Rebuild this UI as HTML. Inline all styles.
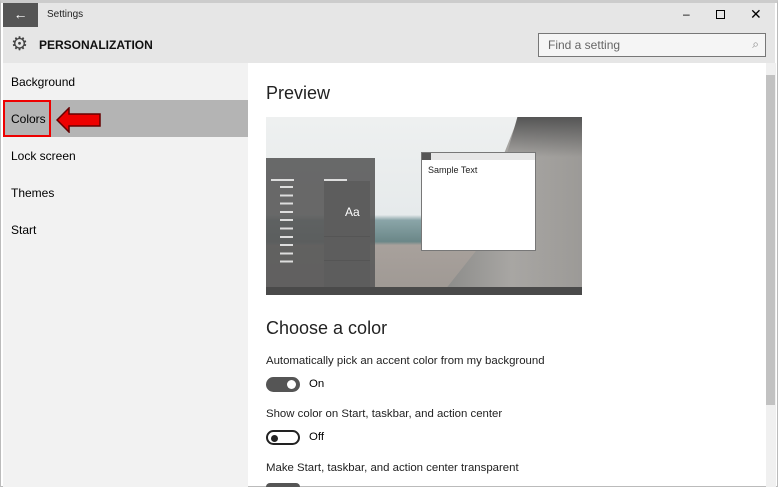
<!DOCTYPE html>
<html style="width:778px;height:487px;overflow:hidden"><head><style>
*{margin:0;padding:0;box-sizing:border-box}
body{width:778px;height:487px;background:#fff;font-family:"Liberation Sans",sans-serif;position:relative;overflow:hidden;color:#000}
.a{position:absolute}
</style></head><body>
<div class="a" style="left:0;top:0;width:778px;height:487px;border:1px solid #bbb;border-top:3px solid #ccc"></div>
<div class="a" style="left:3px;top:3px;width:772px;height:60px;background:#e6e6e6"></div>
<div class="a" style="left:3px;top:3px;width:35px;height:24px;background:#555;color:#fff;font-size:14px;text-align:center;line-height:22px">←</div>
<div class="a" style="left:47px;top:9px;font-size:10px;color:#222">Settings</div>
<div class="a" style="left:683px;top:7px;font-size:12px">–</div>
<div class="a" style="left:716px;top:10px;width:9px;height:9px;border:1px solid #000"></div>
<div class="a" style="left:750px;top:6px;font-size:14px">✕</div>
<div class="a" style="left:11px;top:35px;font-size:19px;color:#444;line-height:19px">⚙</div>
<div class="a" style="left:39px;top:38px;font-size:12px;font-weight:bold;color:#111">PERSONALIZATION</div>
<div class="a" style="left:538px;top:33px;width:228px;height:24px;border:1px solid #777;background:#f5f5f5;font-size:12px;color:#666;padding:4px 9px">Find a setting<span style="position:absolute;right:6px;top:3px;color:#888">⌕</span></div>
<div class="a" style="left:3px;top:63px;width:245px;height:424px;background:#f2f2f2"></div>
<div class="a" style="left:3px;top:100px;width:245px;height:37px;background:#b4b4b4"></div>
<div class="a" style="left:3px;top:100px;width:48px;height:37px;border:2px solid #e00"></div>
<svg class="a" style="left:56px;top:107px" width="46" height="26"><polygon points="1,13 13,1 13,7 44,7 44,19 13,19 13,25" fill="#e00" stroke="#600" stroke-width="1.5"/></svg>
<div class="a" style="left:11px;top:75px;font-size:12px">Background</div>
<div class="a" style="left:11px;top:112px;font-size:12px">Colors</div>
<div class="a" style="left:11px;top:149px;font-size:12px">Lock screen</div>
<div class="a" style="left:11px;top:186px;font-size:12px">Themes</div>
<div class="a" style="left:11px;top:223px;font-size:12px">Start</div>
<div class="a" style="left:766px;top:63px;width:10px;height:424px;background:#f0f0f0"></div>
<div class="a" style="left:766px;top:75px;width:9px;height:330px;background:#c2c2c2"></div>
<div class="a" style="left:266px;top:83px;font-size:18px;color:#222;font-weight:normal">Preview</div>
<div class="a" style="left:266px;top:117px;width:316px;height:178px;overflow:hidden;background:linear-gradient(180deg,#eef0f0 0%,#e6eaeb 55%,#8aa5a8 58%,#6b8788 70%,#a8a19c 72%,#9e9893 100%)">
 <div class="a" style="left:175px;top:0;width:141px;height:178px;background:linear-gradient(90deg,#8a8a88 0%,#a8a6a3 50%,#9c9a97 100%);clip-path:polygon(55% 0,100% 0,100% 100%,0 100%,35% 65%,45% 20%)"></div>
 <div class="a" style="left:240px;top:0;width:76px;height:40px;background:linear-gradient(180deg,#555,transparent);clip-path:polygon(15% 0,100% 0,100% 100%,0 100%)"></div>
 <div class="a" style="left:0;top:41px;width:109px;height:137px;background:rgba(90,90,90,.9)"></div>
 <div class="a" style="left:58px;top:64px;width:46px;height:114px;background:#5d5d5d"></div>
 <div class="a" style="left:58px;top:119px;width:46px;height:1px;background:#555"></div>
 <div class="a" style="left:58px;top:143px;width:46px;height:1px;background:#555"></div>
 <div class="a" style="left:79px;top:88px;color:#fff;font-size:12px">Aa</div>
 <div class="a" style="left:5px;top:62px;width:23px;height:2px;background:#ddd"></div>
 <div class="a" style="left:58px;top:62px;width:23px;height:2px;background:#ddd"></div>
 <div class="a" style="left:14px;top:69px;width:13px;height:80px;background:repeating-linear-gradient(#ddd 0 2px,transparent 2px 8.3px)"></div>
 <div class="a" style="left:0;top:170px;width:316px;height:8px;background:#4a4a4a"></div>
 <div class="a" style="left:155px;top:35px;width:115px;height:99px;background:#fff;border:1px solid #777"></div>
 <div class="a" style="left:156px;top:36px;width:113px;height:7px;background:#e6e6e6"></div>
 <div class="a" style="left:156px;top:36px;width:9px;height:7px;background:#555"></div>
 <div class="a" style="left:162px;top:48px;font-size:9px;color:#222">Sample Text</div>
</div>
<div class="a" style="left:266px;top:318px;font-size:18px;color:#222">Choose a color</div>
<div class="a" style="left:266px;top:355px;font-size:11.4px;color:#222">Automatically pick an accent color from my background</div>
<div class="a" style="left:266px;top:377px;width:34px;height:15px;border-radius:8px;background:#555"><div class="a" style="right:4px;top:3px;width:9px;height:9px;border-radius:50%;background:#fff"></div></div>
<div class="a" style="left:309px;top:378px;font-size:11.4px">On</div>
<div class="a" style="left:266px;top:408px;font-size:11.4px;color:#222">Show color on Start, taskbar, and action center</div>
<div class="a" style="left:266px;top:430px;width:34px;height:15px;border-radius:8px;border:2px solid #222"><div class="a" style="left:3px;top:2.5px;width:7px;height:7px;border-radius:50%;background:#222"></div></div>
<div class="a" style="left:309px;top:431px;font-size:11.4px">Off</div>
<div class="a" style="left:266px;top:462px;font-size:11.4px;color:#222">Make Start, taskbar, and action center transparent</div>
<div class="a" style="left:266px;top:483px;width:34px;height:4px;border-radius:8px 8px 0 0;background:#555"></div>
</body></html>
